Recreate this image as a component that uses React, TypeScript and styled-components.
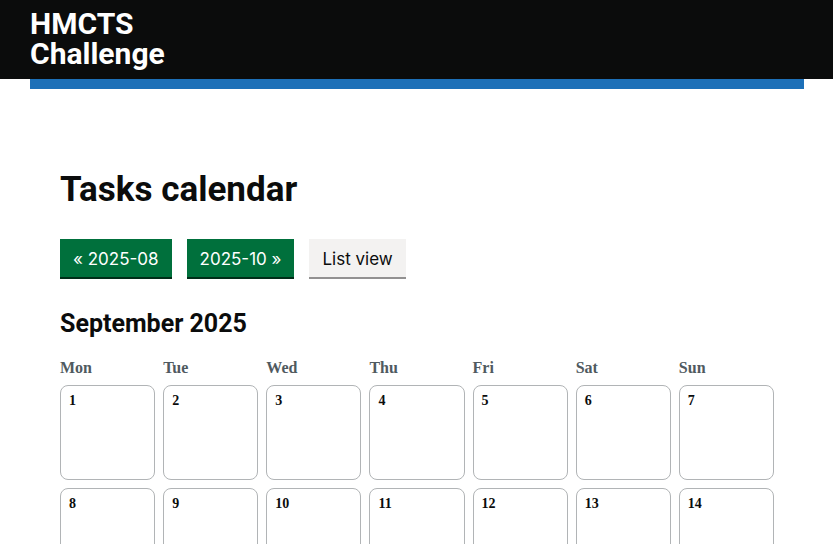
import React from "react";
import styled, { createGlobalStyle } from "styled-components";

const GlobalStyle = createGlobalStyle`
  * { box-sizing: border-box; }
  body {
    margin: 0;
    background: #fff;
    color: #0b0c0c;
    font-family: Roboto, "Liberation Sans", sans-serif;
  }
`;

const Header = styled.header`
  display: flex;
  justify-content: center;
  height: 79px;
  padding: 0 29px 0 30px;
  background: #0b0c0c;
`;

const HeaderInner = styled.div`
  flex: 1;
  max-width: 960px;
  height: 89px;
  padding-top: 9px;
  border-bottom: 10px solid #1d70b8;
`;

const Brand = styled.a`
  display: block;
  max-width: 160px;
  color: #fff;
  font-size: 30px;
  font-weight: 700;
  line-height: 30px;
  text-decoration: none;
`;

const Main = styled.main`
  max-width: 1020px;
  margin: 0 auto;
  padding: 90px 59px 0 60px;
`;

const Title = styled.h1`
  margin: 0 0 28px;
  font-size: 35px;
  font-weight: 700;
  line-height: 42px;
`;

const Actions = styled.nav`
  display: flex;
  flex-wrap: wrap;
  gap: 15px;
  margin-bottom: 30px;
`;

const ButtonLink = styled.a<{ $secondary?: boolean }>`
  padding: 9px 13px 6px;
  border-bottom: 2px solid ${(p) => (p.$secondary ? "#929191" : "#002d18")};
  background: ${(p) => (p.$secondary ? "#f3f2f1" : "#00703c")};
  color: ${(p) => (p.$secondary ? "#0b0c0c" : "#fff")};
  font-family: Inter, sans-serif;
  font-size: 17px;
  line-height: 23px;
  text-decoration: none;
  white-space: nowrap;
`;

const Month = styled.h2`
  margin: 0 0 20px;
  font-size: 25px;
  font-weight: 700;
  line-height: 30px;
`;

const Calendar = styled.div`
  display: grid;
  grid-template-columns: repeat(7, minmax(0, 1fr));
  gap: 8px;
  font-family: "Liberation Serif", serif;
  font-weight: 700;
`;

const Weekday = styled.div`
  color: #505a5f;
  font-size: 16px;
  line-height: 18px;
`;

const Day = styled.div`
  height: 95px;
  padding: 7px 8px;
  border: 1px solid #b1b4b6;
  border-radius: 8px;
  font-size: 14px;
  line-height: 16px;
`;

const weekdays = ["Mon", "Tue", "Wed", "Thu", "Fri", "Sat", "Sun"];
const days = Array.from({ length: 14 }, (_, i) => i + 1);

export default function App() {
  return (
    <>
      <GlobalStyle />
      <Header>
        <HeaderInner>
          <Brand href="#">HMCTS Challenge</Brand>
        </HeaderInner>
      </Header>
      <Main>
        <Title>Tasks calendar</Title>
        <Actions>
          <ButtonLink href="#">« 2025-08</ButtonLink>
          <ButtonLink href="#">2025-10 »</ButtonLink>
          <ButtonLink href="#" $secondary>
            List view
          </ButtonLink>
        </Actions>
        <Month>September 2025</Month>
        <Calendar>
          {weekdays.map((name) => (
            <Weekday key={name}>{name}</Weekday>
          ))}
          {days.map((day) => (
            <Day key={day}>{day}</Day>
          ))}
        </Calendar>
      </Main>
    </>
  );
}
